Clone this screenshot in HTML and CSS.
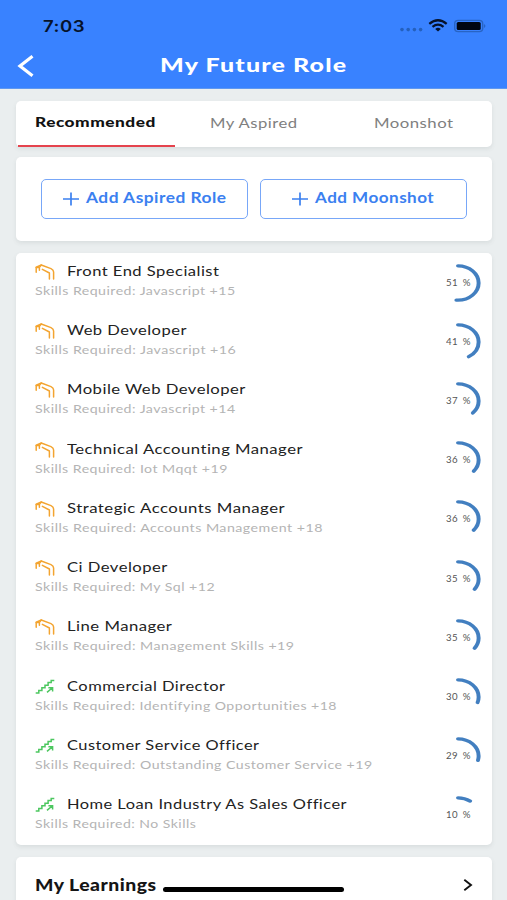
FILE: index.html
```html
<!DOCTYPE html>
<html lang="en">
<head>
<meta charset="utf-8">
<title>My Future Role</title>
<link rel="stylesheet" href="styles.css">
</head>
<body>
<header class="header">
  <div class="status">
    <span class="time"><span class="fit" data-w="42">7:03</span></span>
    <svg class="indicators" width="88" height="16" viewBox="0 0 88 16">
      <g fill="#2460bd"><circle cx="3" cy="12.6" r="1.8"/><circle cx="9.2" cy="12.6" r="1.8"/><circle cx="15.4" cy="12.6" r="1.8"/><circle cx="21.6" cy="12.6" r="1.8"/></g>
      <g fill="none" stroke="#06122b" stroke-width="2.3"><path d="M30.3 6.8Q39 -.2 47.7 6.8"/><path d="M33.5 9.8Q39 5.4 44.5 9.8"/></g>
      <path d="M36.2 12Q39 9.6 41.8 12L39 14.6Z" fill="#06122b"/>
      <rect x="55.7" y="3.4" width="28" height="11.2" rx="3.4" fill="none" stroke="#2864c4" stroke-width="1.4"/>
      <rect x="57.7" y="5" width="24" height="8" rx="1.6" fill="#000611"/>
      <path d="M85.3 7q2 2 0 4z" fill="#1f57b0"/>
    </svg>
  </div>
  <div class="titlebar">
    <svg class="back" width="18" height="24" viewBox="0 0 18 24"><path d="M15.5 2.3L3 12L15.5 21.7" fill="none" stroke="#fff" stroke-width="3.2"/></svg>
    <h1 class="title"><span class="fit" data-w="187">My Future Role</span></h1>
  </div>
</header>
<main class="content">
  <nav class="card tabs">
    <a class="tab active"><span class="fit" data-w="121">Recommended</span></a>
    <a class="tab aspired"><span class="fit" data-w="88">My Aspired</span></a>
    <a class="tab moonshot"><span class="fit" data-w="79">Moonshot</span></a>
  </nav>
  <section class="card actions">
    <button class="btn"><svg class="plus" width="16" height="14" viewBox="0 0 16 14"><path d="M0 7H16M8 .5V13.5" stroke="#3b80f0" stroke-width="1.7"/></svg><span class="fit" data-w="140">Add Aspired Role</span></button>
    <button class="btn"><svg class="plus" width="16" height="14" viewBox="0 0 16 14"><path d="M0 7H16M8 .5V13.5" stroke="#3b80f0" stroke-width="1.7"/></svg><span class="fit" data-w="119">Add Moonshot</span></button>
  </section>
  <section class="card roles" id="roles"></section>
  <section class="card learnings">
    <h2 class="learn-title"><span class="fit" data-w="121">My Learnings</span></h2>
    <svg width="10" height="14" viewBox="0 0 10 14"><path d="M1.3 1.8L8 7L1.3 12.2" fill="none" stroke="#111" stroke-width="1.9"/></svg>
  </section>
</main>
<div class="home-indicator"></div>
<script src="app.js"></script>
</body>
</html>
```
FILE: styles.css
```css
* { box-sizing: border-box; }
body {
  margin: 0;
  height: 900px;
  overflow: hidden;
  position: relative;
  background: #eaeeef;
  font-family: Lato, "Liberation Sans", sans-serif;
}
.fit {
  display: inline-block;
  white-space: nowrap;
  letter-spacing: .4px;
  transform-origin: 0 50%;
}
.header {
  height: 89px;
  background: #3982ff;
  border-bottom: 1px solid #5f98f0;
}
.status {
  height: 44px;
  padding: 18px 20px 0 43px;
  display: flex;
  justify-content: space-between;
}
.time {
  font: 600 15.5px/17px Inter, sans-serif;
  color: #06122b;
}
.indicators { margin-top: -1px; }
.titlebar {
  height: 44px;
  padding-left: 17px;
  display: flex;
  align-items: center;
}
.title {
  margin: -3px 0 0 125px;
  font-size: 19.5px;
  line-height: 24px;
  font-weight: 900;
  color: #fff;
}
.title .fit { letter-spacing: .9px; }
.content {
  padding: 12px 15px 0 16px;
}
.card {
  background: #fff;
  border-radius: 5px;
  box-shadow: 0 2px 4px rgba(90, 105, 110, .12);
}
.tabs {
  height: 46px;
  margin-bottom: 10px;
  display: grid;
  grid-template-columns: 159px 159px 1fr;
}
.tab {
  font-size: 14px;
  line-height: 18px;
  color: #808080;
  padding: 13px 0 0 35px;
}
.tab.moonshot { padding-left: 40px; }
.tab.active {
  padding: 12px 0 0 17px;
  margin-left: 2px;
  color: #111;
  font-weight: 900;
  border-bottom: 2px solid #e5434d;
}
.actions {
  height: 84px;
  margin-bottom: 12px;
  padding: 22px 25px;
  display: flex;
  gap: 12px;
}
.btn {
  width: 207px;
  height: 40px;
  padding: 0 0 2px;
  display: flex;
  align-items: center;
  justify-content: center;
  gap: 7px;
  background: #fff;
  border: 1.5px solid #78a7f8;
  border-radius: 5px;
  font: 700 14.5px/18px Lato, sans-serif;
  color: #3b80f0;
}
.plus { margin-top: 1px; }
.roles {
  height: 592px;
  margin-bottom: 12px;
  padding: 8px 10px 0 19px;
}
.role {
  height: 59.22px;
  display: flex;
  justify-content: space-between;
}
.role-name {
  height: 21px;
  display: flex;
  align-items: flex-start;
  font-size: 14px;
  line-height: 20px;
  color: #222;
}
.role-icon {
  width: 20px;
  height: 16px;
  margin: 3px 12px 0 0;
}
.role-skills {
  font-size: 12px;
  line-height: 18px;
  color: #b4b4b4;
}
.ring {
  position: relative;
  width: 48px;
  height: 40px;
  margin-top: 1.5px;
  display: flex;
  align-items: center;
  justify-content: center;
  font-size: 8.5px;
  color: #555;
}
.ring svg {
  position: absolute;
  inset: 0;
}
.ring .fit { word-spacing: 1.5px; }
.learnings {
  height: 60px;
  padding: 17px 19px 0 19px;
  display: flex;
  justify-content: space-between;
}
.learnings svg { margin-top: 4px; }
.learn-title {
  margin: 0;
  font-size: 16px;
  line-height: 22px;
  font-weight: 900;
  color: #151515;
}
.home-indicator {
  position: absolute;
  left: 163px;
  top: 887px;
  width: 181px;
  height: 5px;
  border-radius: 3px;
  background: #000;
}
```
FILE: app.js
```js
// name, name width, skills, skills width, match percent, icon
const roles = [
  ["Front End Specialist", 152.5, "Javascript +15", 200.5, 51, "bridge"],
  ["Web Developer", 120.5, "Javascript +16", 201, 41, "bridge"],
  ["Mobile Web Developer", 178.5, "Javascript +14", 200.5, 37, "bridge"],
  ["Technical Accounting Manager", 236, "Iot Mqqt +19", 193, 36, "bridge"],
  ["Strategic Accounts Manager", 218, "Accounts Management +18", 288, 36, "bridge"],
  ["Ci Developer", 101, "My Sql +12", 180, 35, "bridge"],
  ["Line Manager", 105, "Management Skills +19", 259.5, 35, "bridge"],
  ["Commercial Director", 159, "Identifying Opportunities +18", 301.5, 30, "stairs"],
  ["Customer Service Officer", 192, "Outstanding Customer Service +19", 338, 29, "stairs"],
  ["Home Loan Industry As Sales Officer", 280.5, "No Skills", 161.5, 10, "stairs"]
];

const icons = {
  bridge: '<g fill="none" stroke="#f3a430" stroke-width="1.5" stroke-linejoin="round" stroke-linecap="round"><path d="M1.2 8.2V3.2L6.3 1L16 4.6Q18.6 5.8 18.6 8V15"/><path d="M1.2 3.4H4.4V6.2M4.4 3.4L6.3 1M7.4 5.4L14.4 9V15"/></g>',
  stairs: '<g fill="none" stroke="#4cc75f" stroke-width="1.5"><path d="M.7 14H3.8V11.4H6.9V8.8H10V6.2H13.1V3.6H16.2V1.4H19.3"/><path d="M12 13.4L17.4 8.8M13.4 8.8H17.6V12.6"/></g>'
};

const circumference = 2 * Math.PI * 17.2;

document.getElementById("roles").innerHTML = roles.map(([name, nameW, skills, skillsW, pct, icon]) => `
  <article class="role">
    <div>
      <div class="role-name"><svg class="role-icon" viewBox="0 0 20 16">${icons[icon]}</svg><span class="fit" data-w="${nameW}">${name}</span></div>
      <div class="role-skills"><span class="fit" data-w="${skillsW}">Skills Required: ${skills}</span></div>
    </div>
    <div class="ring">
      <svg width="48" height="40" viewBox="0 0 40 40" preserveAspectRatio="none"><circle cx="20" cy="20" r="17.2" fill="none" stroke="#427fc0" stroke-width="3.3" stroke-linecap="round" stroke-dasharray="${circumference * pct / 100} 200" transform="rotate(-90 20 20)"/></svg>
      <span class="fit" data-w="25">${pct} %</span>
    </div>
  </article>`).join("");

// Stretch each label horizontally to its wide-set width.
document.querySelectorAll(".fit").forEach(el => {
  const natural = el.offsetWidth;
  const target = Number(el.dataset.w);
  el.style.transform = `scaleX(${target / natural})`;
  el.style.marginRight = `${target - natural}px`;
});
```
